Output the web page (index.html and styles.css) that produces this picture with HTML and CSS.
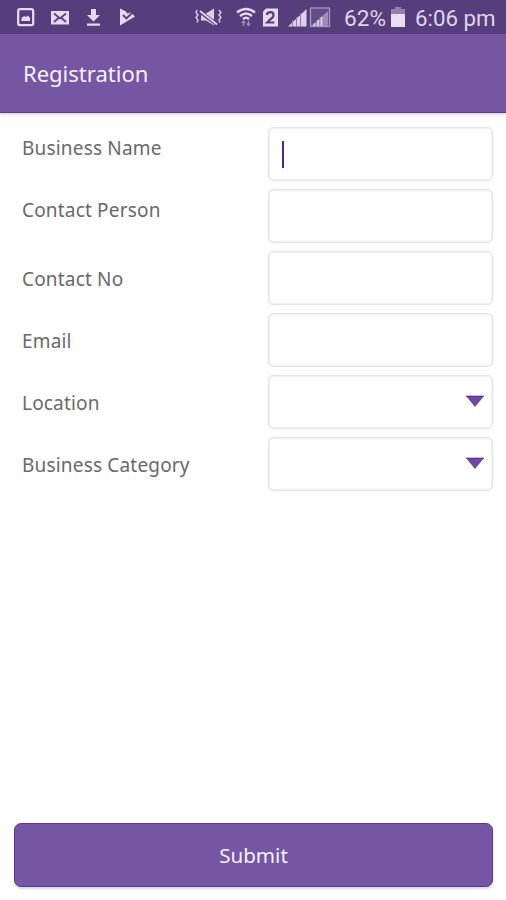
FILE: index.html
```html
<!DOCTYPE html>
<html lang="en">
<head>
<meta charset="utf-8">
<title>Registration</title>
<link rel="stylesheet" href="styles.css">
</head>
<body>
<div class="screen">
  <div class="status">
    <svg class="notifications" width="136" height="34" viewBox="0 0 136 34">
      <rect x="18.2" y="9.2" width="15" height="16" rx="2" fill="none" stroke="#e4daf0" stroke-width="2.3"/>
      <path d="M21.5 21v-3l2.5-2 2 1 2-1.500 2 2.500v3z" fill="#e4daf0"/>
      <path d="M51 11h18v13.500h-18z" fill="#e4daf0"/>
      <path d="M54 13.500l6 5 6-5M54 22l4.500-4M66 22l-4.500-4" fill="none" stroke="#563e7c" stroke-width="1.7"/>
      <path d="M91 9h5v6h4l-6.500 6.500L87 15h4zM87 23.500h13v2.300H87z" fill="#e4daf0"/>
      <path d="M120 8.500l6 3 1 2 4-1 4 4-15 9z" fill="#e4daf0"/>
      <path d="M123 15l3.500 3.500 6-6" fill="none" stroke="#563e7c" stroke-width="1.8"/>
    </svg>
    <svg class="signals" width="142" height="34" viewBox="192 0 142 34">
      <path d="M201 13.500h5l8-5v17l-8-5h-5z" fill="#dcd0ea"/>
      <path d="M201 12.500l16 12" stroke="#563e7c" stroke-width="4"/>
      <path d="M200 11l17 13.500" stroke="#dcd0ea" stroke-width="2"/>
      <path d="M197 10l-1 2.500 2 2.500-2 2.500 2 2.500-1 2.500M219 10l2 2.500-2 2.500 2 2.500-2 2.500 1 2.500" fill="none" stroke="#dcd0ea" stroke-width="1.400"/>
      <path d="M237 12.500q9-7 18 0M240 16q6-5 12 0M243 19q3-2.500 6 0" fill="none" stroke="#e4daf0" stroke-width="2.300"/>
      <path d="M243.500 26v-5M241.800 23l1.700-2 1.700 2M248.500 20.500v5M246.800 23.500l1.700 2 1.700-2" fill="none" stroke="#9e8bbb" stroke-width="1.300"/>
      <path d="M266 8.500h12v18h-15V11.500z" fill="#e4daf0"/>
      <path d="M266.800 15q.5-2.800 3.500-2.800 3.200 0 3.200 3 0 2-3.500 4.500l-2.700 2.800h7" fill="none" stroke="#563e7c" stroke-width="2.200"/>
      <path d="M306.500 9v17.500H288z" fill="#dcd0ea"/>
      <path d="M292.500 20v7M296.500 17v10M300.500 13v14" stroke="#8e7aab" stroke-width="1"/>
      <rect x="310.500" y="8" width="19" height="18.500" fill="#644c89" stroke="#a797c0" stroke-width="1.300"/>
      <path d="M328 11v15h-17z" fill="#9c8ab7"/>
      <path d="M314.500 23.500v2.500M318 20v6M321.500 17v9" stroke="#dcd0ea" stroke-width="1.800"/>
    </svg>
    <span class="percent">62%</span>
    <svg class="battery" width="14" height="20" viewBox="0 0 14 20">
      <path d="M4 0h6v2h4v5H0V2h4z" fill="#9281ac"/>
      <path d="M0 7h14v13H0z" fill="#e8e0f2"/>
    </svg>
    <span class="clock">6:06 pm</span>
  </div>
  <header class="header"><h1 class="title">Registration</h1></header>
  <form class="form">
    <div class="row raised"><label class="label">Business Name</label><div class="field"><span class="caret"></span></div></div>
    <div class="row raised"><label class="label">Contact Person</label><div class="field"></div></div>
    <div class="row"><label class="label">Contact No</label><div class="field"></div></div>
    <div class="row"><label class="label">Email</label><div class="field"></div></div>
    <div class="row"><label class="label">Location</label><div class="field select"><svg width="20" height="13" viewBox="0 0 20 13"><path d="M1 1h18l-9 11z" fill="#7046a2"/><path d="M1 1.200h18" stroke="#562d91"/></svg></div></div>
    <div class="row"><label class="label">Business Category</label><div class="field select"><svg width="20" height="13" viewBox="0 0 20 13"><path d="M1 1h18l-9 11z" fill="#7046a2"/><path d="M1 1.200h18" stroke="#562d91"/></svg></div></div>
  </form>
  <button class="submit" type="button">Submit</button>
</div>
</body>
</html>
```
FILE: styles.css
```css
* { box-sizing: border-box; }
body { margin: 0; background: #fefefe; font-family: "Noto Sans", sans-serif; }
.screen { width: 506px; height: 900px; display: flex; flex-direction: column; overflow: hidden; }
.status { height: 34px; flex: none; display: flex; align-items: center; background: #563e7c; color: #dfd5ea; font-family: Roboto, sans-serif; font-size: 22.6px; line-height: 34px; white-space: nowrap; }
.status svg { flex: none; }
.signals { margin-left: 56px; }
.percent { width: 46px; margin-left: 10px; padding-top: 3px; }
.battery { margin-left: 1px; }
.clock { margin-left: 10px; padding-top: 2px; font-size: 22.3px; }
.header { height: 79px; flex: none; display: flex; align-items: center; padding-left: 23px; background: #7456a3; border-bottom: 1px solid #5d3c91; box-shadow: 0 2px 2px #e2d9e5; }
.title { margin: 0; color: #f8f1ff; font-size: 22px; font-weight: 400; line-height: 30px; }
.form { display: flex; flex-direction: column; gap: 8px; padding: 14px 13px 0 22px; }
.row { display: flex; align-items: center; justify-content: space-between; height: 54px; }
.label { padding-top: 2px; color: #696969; font-size: 19px; letter-spacing: 0.18px; line-height: 28px; white-space: nowrap; }
.raised .label { padding: 0 0 12px; }
.field { width: 225px; height: 54px; border: 1px solid #e5e5e7; box-shadow: inset 0 0 0 1px #f0f0f1; border-radius: 5px; background: #fff; display: flex; align-items: center; padding-left: 13px; }
.caret { width: 2px; height: 27px; background: #51278d; }
.select { justify-content: flex-end; padding: 0 7px 1px 0; }
.submit { width: 479px; height: 64px; margin: auto 0 13px 14px; flex: none; border: 1px solid #5d3795; border-radius: 7px; background: #7456a3; box-shadow: 0 2px 2px #ddd9e1; color: #f8f1ff; font-family: inherit; font-size: 20.6px; padding: 0; }
```
